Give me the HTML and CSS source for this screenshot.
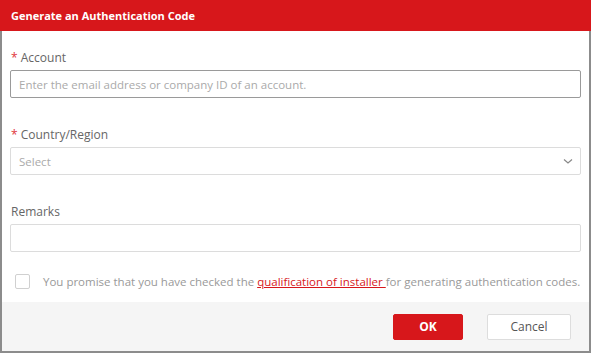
FILE: index.html
```html
<!DOCTYPE html>
<html lang="en">
<head>
<meta charset="UTF-8">
<title>Generate an Authentication Code</title>
<link rel="stylesheet" href="styles.css">
</head>
<body>
<div class="dialog">
    <div class="dialog-header">Generate an Authentication Code</div>
    <form class="dialog-body">
        <div class="form-group">
            <label class="required" for="account">Account</label>
            <input type="text" id="account" class="field field-active" placeholder="Enter the email address or company ID of an account.">
        </div>
        <div class="form-group">
            <label class="required" for="country">Country/Region</label>
            <div class="field select">
                <span class="placeholder">Select</span>
                <svg class="arrow" width="12" height="12" viewBox="0 0 12 12"><path d="M2 4.5 L6 8 L10 4.5" fill="none" stroke="#888" stroke-width="1.2"/></svg>
            </div>
        </div>
        <div class="form-group">
            <label for="remarks">Remarks</label>
            <input type="text" id="remarks" class="field">
        </div>
        <div class="agree">
            <span class="checkbox"></span>
            <span class="agree-text">You promise that you have checked the <a href="#">qualification of installer </a>for generating authentication codes.</span>
        </div>
    </form>
    <div class="dialog-footer">
        <button type="button" class="btn btn-primary">OK</button>
        <button type="button" class="btn">Cancel</button>
    </div>
</div>
</body>
</html>
```

FILE: styles.css
```css
body {
    margin: 0;
    font-family: "Open Sans", "Noto Sans", sans-serif;
    background: #fff;
}

.dialog {
    width: 591px;
    height: 353px;
    box-sizing: border-box;
    border: 2px solid #8c8c8c;
    border-top: none;
    display: flex;
    flex-direction: column;
    background: #fff;
}

.dialog-header {
    height: 31px;
    margin: 0 -2px;
    padding-left: 11px;
    background-color: #d7171b;
    color: #fff;
    font-size: 11px;
    font-weight: bold;
    line-height: 31px;
}

.dialog-body {
    flex: 1;
    padding: 18px 8px 0 8px;
    margin: 0;
}

.form-group {
    margin-bottom: 28px;
}

label {
    display: block;
    font-size: 12px;
    color: #666;
    line-height: 18px;
    margin-bottom: 3px;
    padding-left: 1px;
}

label.required::before {
    content: "* ";
    color: #e0343a;
}

.field {
    display: block;
    width: 100%;
    height: 28px;
    box-sizing: border-box;
    border: 1px solid #dcdcdc;
    border-radius: 2px;
    padding: 0 8px;
    font-family: inherit;
    font-size: 11.5px;
    color: #333;
    outline: none;
}

.field-active {
    border-color: #9a9a9a;
}

.field::placeholder,
.placeholder {
    color: #aaa;
}

.select {
    display: flex;
    align-items: center;
    justify-content: space-between;
    padding-right: 6px;
}

.agree {
    display: flex;
    align-items: center;
    gap: 13px;
    padding: 0 0 0 5px;
    margin-top: -6px;
    font-size: 11.5px;
    color: #999;
}

.agree-text {
    white-space: nowrap;
}

.checkbox {
    width: 13px;
    height: 13px;
    border: 1px solid #d0d0d0;
    border-radius: 2px;
    background: #fff;
}

.agree a {
    color: #d7171b;
}

.dialog-footer {
    height: 49px;
    background: #f5f5f5;
    display: flex;
    justify-content: flex-end;
    align-items: center;
    gap: 24px;
    padding-right: 18px;
}

.btn {
    height: 26px;
    width: 84px;
    border: 1px solid #ddd;
    border-radius: 2px;
    background: #fff;
    font-family: inherit;
    font-size: 12px;
    color: #555;
    cursor: pointer;
}

.btn-primary {
    width: 70px;
    background: #d7171b;
    border-color: #d7171b;
    color: #fff;
    font-weight: bold;
}
```
